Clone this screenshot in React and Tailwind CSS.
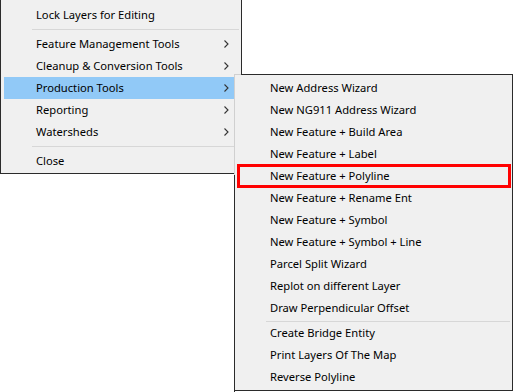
import React from 'react';

const mainItems = [
    { label: 'Lock Layers for Editing' },
    { sep: true },
    { label: 'Feature Management Tools', sub: true },
    { label: 'Cleanup & Conversion Tools', sub: true },
    { label: 'Production Tools', sub: true, active: true },
    { label: 'Reporting', sub: true },
    { label: 'Watersheds', sub: true },
    { sep: true },
    { label: 'Close' },
];

const subItems = [
    'New Address Wizard',
    'New NG911 Address Wizard',
    'New Feature + Build Area',
    'New Feature + Label',
    'New Feature + Polyline',
    'New Feature + Rename Ent',
    'New Feature + Symbol',
    'New Feature + Symbol + Line',
    'Parcel Split Wizard',
    'Replot on different Layer',
    'Draw Perpendicular Offset',
    null,
    'Create Bridge Entity',
    'Print Layers Of The Map',
    'Reverse Polyline',
];

const Chevron = () => (
    <svg width="5" height="8" viewBox="0 0 5 8" className="shrink-0">
        <path d="M0.5 0.5 L4 4 L0.5 7.5" fill="none" stroke="#333" strokeWidth="1.1" />
    </svg>
);

const MainMenu = () => (
    <div className="absolute left-0 top-0 w-[242px] h-[174px] bg-[#f0f0f0] border-x border-b border-[#2b2b2b] pt-[4px]">
        {mainItems.map((item, i) =>
            item.sep ? (
                <div key={i} className="h-[7px] flex items-center pl-[31px] pr-[2px]">
                    <div className="h-px w-full bg-[#d7d7d7]" />
                </div>
            ) : (
                <div
                    key={i}
                    className={
                        'h-[22px] flex items-center ml-[3px] mr-[6px] pl-[32px] pr-[6px] ' +
                        (item.active ? 'bg-[#91c9f7]' : '')
                    }
                >
                    <span className="flex-1">{item.label}</span>
                    {item.sub && <Chevron />}
                </div>
            )
        )}
    </div>
);

const SubMenu = () => (
    <div className="absolute left-[235px] top-[74px] w-[278px] h-[317px] bg-[#f0f0f0] border-t border-r border-b border-[#2b2b2b] pt-[2px]">
        <div className="absolute -left-px -top-px w-px h-[101px] bg-[#d0d0d0]" />
        <div className="absolute -left-px top-[100px] w-px h-[217px] bg-[#2b2b2b]" />
        <div className="absolute -left-px -top-px w-[7px] h-px bg-[#d0d0d0]" />
        {subItems.map((label, i) =>
            label === null ? (
                <div key={i} className="h-[3px] flex items-end pl-[31px] pr-[2px]">
                    <div className="h-px w-full bg-[#d7d7d7]" />
                </div>
            ) : (
                <div key={i} className="h-[22px] flex items-center pl-[35px]">
                    {label}
                </div>
            )
        )}
    </div>
);

const App = () => {
    return (
        <div
            className="relative w-[514px] h-[392px] bg-white overflow-hidden text-[11.2px] text-black"
            style={{ fontFamily: '"Noto Sans", "Open Sans", sans-serif' }}
        >
            <MainMenu />
            <SubMenu />
            <div className="absolute left-[237px] top-[164px] w-[274px] h-[24px] border-[3px] border-[#ff0000]" />
        </div>
    );
};

export default App;
